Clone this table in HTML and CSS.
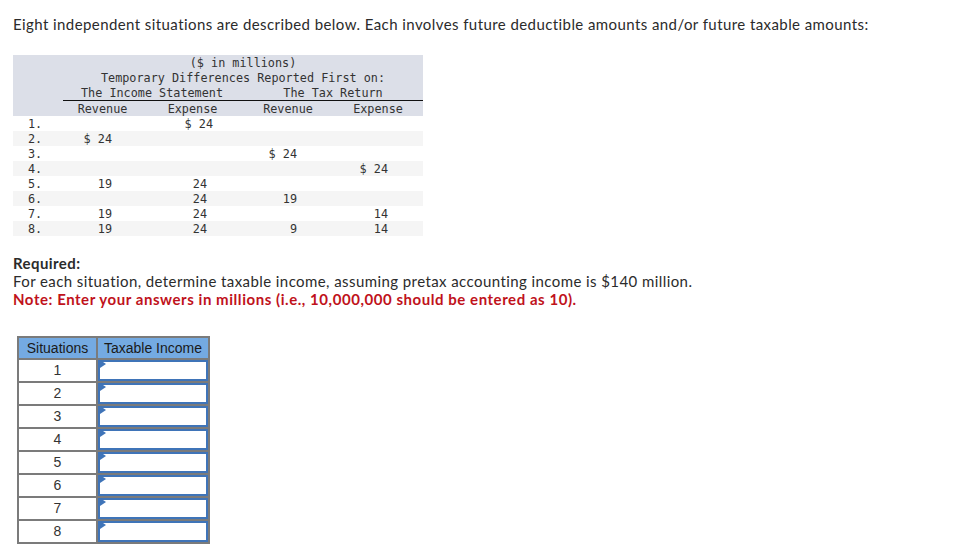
FILE: index.html
```html
<!DOCTYPE html>
<html>
<head>
<meta charset="utf-8">
<link rel="stylesheet" href="styles.css">
</head>
<body>
<p class="intro">Eight independent situations are described below. Each involves future deductible amounts and/or future taxable amounts:</p>

<div class="diff">
  <div class="diff-head">
    <div class="h-full">($ in millions)</div>
    <div class="h-full">Temporary Differences Reported First on:</div>
    <div class="h-group h-left">The Income Statement</div>
    <div class="h-group h-right">The Tax Return</div>
    <div class="h-num"></div>
    <div class="h-lbl shift">Revenue</div>
    <div class="h-lbl shift">Expense</div>
    <div class="h-lbl">Revenue</div>
    <div class="h-lbl">Expense</div>
  </div>
  <div class="diff-row"><span class="n">1.</span><span class="c1"></span><span class="c2 wide">$ 24</span><span class="c3"></span><span class="c4"></span></div>
  <div class="diff-row alt"><span class="n">2.</span><span class="c1">$ 24</span><span class="c2"></span><span class="c3"></span><span class="c4"></span></div>
  <div class="diff-row"><span class="n">3.</span><span class="c1"></span><span class="c2"></span><span class="c3">$ 24</span><span class="c4"></span></div>
  <div class="diff-row alt"><span class="n">4.</span><span class="c1"></span><span class="c2"></span><span class="c3"></span><span class="c4">$ 24</span></div>
  <div class="diff-row"><span class="n">5.</span><span class="c1">19</span><span class="c2">24</span><span class="c3"></span><span class="c4"></span></div>
  <div class="diff-row alt"><span class="n">6.</span><span class="c1"></span><span class="c2">24</span><span class="c3">19</span><span class="c4"></span></div>
  <div class="diff-row"><span class="n">7.</span><span class="c1">19</span><span class="c2">24</span><span class="c3"></span><span class="c4">14</span></div>
  <div class="diff-row alt"><span class="n">8.</span><span class="c1">19</span><span class="c2">24</span><span class="c3">9</span><span class="c4">14</span></div>
</div>

<div class="required">
  <div class="req-title">Required:</div>
  <div>For each situation, determine taxable income, assuming pretax accounting income is $140 million.</div>
  <div class="note">Note: Enter your answers in millions (i.e., 10,000,000 should be entered as 10).</div>
</div>

<table class="answers">
  <colgroup><col class="col-sit"><col class="col-inc"></colgroup>
  <thead>
    <tr><th>Situations</th><th>Taxable Income</th></tr>
  </thead>
  <tbody>
    <tr><td>1</td><td class="in-cell"><div class="input"><span class="flag"></span></div></td></tr>
    <tr><td>2</td><td class="in-cell"><div class="input"><span class="flag"></span></div></td></tr>
    <tr><td>3</td><td class="in-cell"><div class="input"><span class="flag"></span></div></td></tr>
    <tr><td>4</td><td class="in-cell"><div class="input"><span class="flag"></span></div></td></tr>
    <tr><td>5</td><td class="in-cell"><div class="input"><span class="flag"></span></div></td></tr>
    <tr><td>6</td><td class="in-cell"><div class="input"><span class="flag"></span></div></td></tr>
    <tr><td>7</td><td class="in-cell"><div class="input"><span class="flag"></span></div></td></tr>
    <tr><td>8</td><td class="in-cell"><div class="input"><span class="flag"></span></div></td></tr>
  </tbody>
</table>
</body>
</html>
```

FILE: styles.css
```css
html, body {
  margin: 0;
  padding: 0;
  background: #ffffff;
}
body {
  padding: 0 13px;
  font-family: Lato, "Open Sans", sans-serif;
  color: #2b2b2b;
  font-size: 15px;
  letter-spacing: 0.42px;
}
.intro {
  margin: 0;
  padding-top: 15px;
  line-height: 18px;
  height: 40px;
}
.diff {
  width: 410px;
  font-family: "DejaVu Sans Mono", "Liberation Mono", monospace;
  font-size: 11.8px;
  line-height: 15px;
  letter-spacing: 0;
  color: #333;
}
.diff-head {
  background: #dcdfe8;
  display: grid;
  grid-template-columns: 50px repeat(4, 90px);
}
.diff-head > div {
  box-sizing: border-box;
  height: 15px;
  padding-top: 1px;
  white-space: pre;
}
.diff-head > .h-group {
  height: 16px;
}
.h-full {
  grid-column: 2 / 6;
  text-align: center;
}
.h-group {
  border-bottom: 1px solid #111;
}
.h-left {
  grid-column: 2 / 4;
  text-align: center;
  padding-right: 2px;
}
.h-right {
  grid-column: 4 / 6;
  text-align: center;
}
.h-lbl {
  text-align: center;
}
.h-lbl.shift {
  padding-right: 11px;
}
.diff-row {
  display: grid;
  grid-template-columns: 50px repeat(4, 90px);
  height: 15px;
}
.diff-row.alt {
  background: #f5f5f5;
}
.diff-row span {
  white-space: pre;
  text-align: right;
  box-sizing: border-box;
  height: 15px;
  padding-top: 1px;
}
.diff-row .n {
  text-align: left;
  padding-left: 15px;
}
.diff-row .c1 { padding-right: 41px; }
.diff-row .c2 { padding-right: 36px; }
.diff-row .c2.wide { padding-right: 30px; }
.diff-row .c3 { padding-right: 36px; }
.diff-row .c4 { padding-right: 35px; }

.required {
  margin-top: 18px;
  line-height: 18px;
}
.req-title {
  font-weight: bold;
}
.note {
  color: #c0121b;
  font-weight: bold;
  letter-spacing: 0.55px;
}
.answers {
  margin-top: 28px;
  margin-left: 4px;
  border-collapse: collapse;
  table-layout: fixed;
  width: 191px;
  font-family: "Liberation Sans", Arial, sans-serif;
  font-size: 14px;
  letter-spacing: 0;
  color: #222;
}
.col-sit { width: 79px; }
.col-inc { width: 112px; }
.answers th, .answers td {
  border: 2px solid #7b7b7b;
  padding: 0;
}
.answers th {
  background: #74aae2;
  font-weight: normal;
  height: 20px;
  line-height: 20px;
  white-space: nowrap;
  color: #1a1a1a;
}
.answers td {
  text-align: center;
  height: 21px;
  line-height: 21px;
  color: #333;
}
.answers td.in-cell {
  padding: 0;
  text-align: left;
}
.input {
  position: relative;
  height: 17px;
  border: 2px solid #3f74b8;
  background: #fff;
}
.flag {
  position: absolute;
  left: 0;
  top: -2px;
  width: 0;
  height: 0;
  border-top: 4px solid transparent;
  border-bottom: 4px solid transparent;
  border-left: 6px solid #3f74b8;
}
```
